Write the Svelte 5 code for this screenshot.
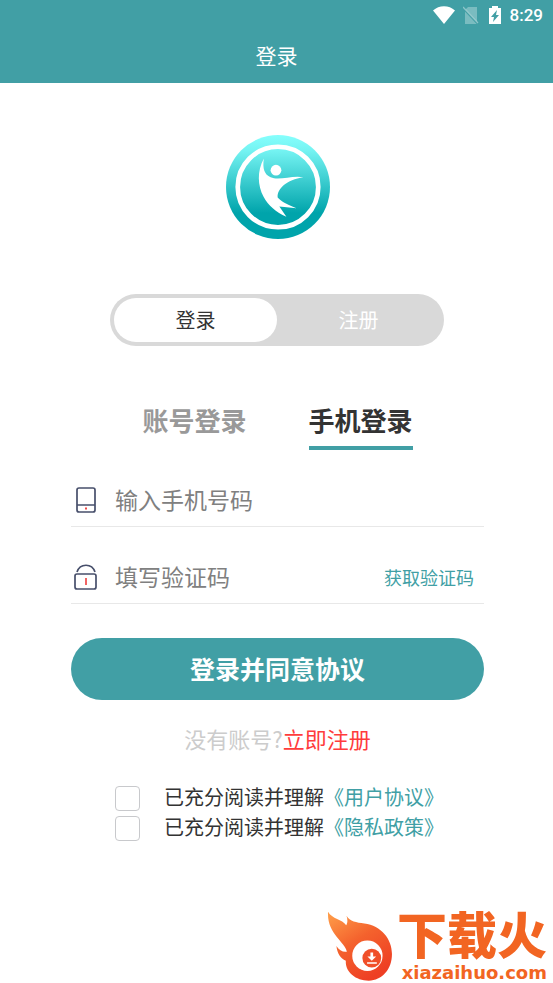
<script lang="ts">
    interface Agreement { id: string; title: string; checked: boolean }

    let mode = $state<'login' | 'register'>('login');
    let tab = $state<'account' | 'phone'>('phone');
    let phone = $state('');
    let code = $state('');

    let agreements = $state<Agreement[]>([
        { id: 'terms', title: '《用户协议》', checked: false },
        { id: 'privacy', title: '《隐私政策》', checked: false },
    ]);
</script>

<div class="page">
    <header>
        <div class="status">
            <svg class="wifi" viewBox="0 0 22 18" aria-hidden="true">
                <path d="M0 4.5C6-1.2 16-1.2 22 4.5L11 18Z" fill="#fff" />
            </svg>
            <svg class="sim" viewBox="0 0 16 18" aria-hidden="true">
                <path d="M5 1h9v17H2V4Z" fill="#fff" opacity="0.3" />
                <path d="M0 2 15 18" stroke="#419fa5" stroke-width="2" />
                <path d="M0 1 15 17" stroke="#fff" stroke-width="1.2" opacity="0.4" />
            </svg>
            <svg class="battery" viewBox="0 0 12 18" aria-hidden="true">
                <path d="M3 0h6v2h3v16H0V2h3Z" fill="#fff" />
                <path d="M8 4 2 11h3l-1 5 6-7H7Z" fill="#419fa5" />
            </svg>
            <span class="time">8:29</span>
        </div>
        <h1>登录</h1>
    </header>

    <main>
        <svg class="logo" viewBox="27 30 310 310" role="img" aria-label="Logo">
            <defs>
                <linearGradient id="teal" x1="0" y1="0" x2="0" y2="1">
                    <stop offset="0" stop-color="#86fffd" />
                    <stop offset="0.15" stop-color="#74f3f2" />
                    <stop offset="0.75" stop-color="#00a4ab" />
                    <stop offset="1" stop-color="#00a4ab" />
                </linearGradient>
            </defs>
            <circle cx="182" cy="185" r="155" fill="url(#teal)" />
            <circle cx="182" cy="185" r="120" fill="none" stroke="#fff" stroke-width="14" />
            <circle cx="176" cy="135" r="16" fill="#fff" />
            <path
                fill="#fff"
                d="M140 100C119 137 121 181 139 214C153 240 176 260 207 274L186 243L237 248C213 238 192 229 181 216C179 190 207 164 258 156C224 149 186 167 160 156C142 148 135 130 140 100Z"
            />
        </svg>

        <div class="switch">
            <button class:on={mode === 'login'} onclick={() => (mode = 'login')}>登录</button>
            <button class:on={mode === 'register'} onclick={() => (mode = 'register')}>注册</button>
        </div>

        <div class="tabs">
            <button class:on={tab === 'account'} onclick={() => (tab = 'account')}>账号登录</button>
            <button class:on={tab === 'phone'} onclick={() => (tab = 'phone')}>手机登录</button>
        </div>

        <form onsubmit={(e) => e.preventDefault()}>
            <div class="field">
                <label for="phone" aria-label="手机号码">
                    <svg viewBox="0 0 30 30" fill="none" stroke="#474f6b" stroke-width="1.7" aria-hidden="true">
                        <rect x="6" y="3" width="18" height="24" rx="2" />
                        <path d="M6 20h18" stroke-width="1.5" />
                        <path d="M14 23.5h2" stroke="#f04848" stroke-width="2" />
                    </svg>
                </label>
                <input id="phone" type="tel" placeholder="输入手机号码" bind:value={phone} />
            </div>

            <div class="field">
                <label for="code" aria-label="验证码">
                    <svg viewBox="0 0 30 30" fill="none" stroke="#474f6b" stroke-width="1.7" aria-hidden="true">
                        <path d="M6 10C9 1 21 1 24 10" />
                        <rect x="4" y="12" width="21" height="15" rx="2" />
                        <path d="M15 16v7" stroke="#f04848" />
                    </svg>
                </label>
                <input id="code" type="text" placeholder="填写验证码" bind:value={code} />
                <button type="button" class="get-code">获取验证码</button>
            </div>

            <button type="submit" class="submit">登录并同意协议</button>

            <p class="hint">没有账号?<a href="#register">立即注册</a></p>

            <div class="agreements">
                {#each agreements as item (item.id)}
                    <div class="agreement">
                        <input id={item.id} type="checkbox" bind:checked={item.checked} />
                        <label for={item.id}>已充分阅读并理解<a href={`#${item.id}`}>{item.title}</a></label>
                    </div>
                {/each}
            </div>
        </form>
    </main>

    <footer>
        <svg class="flame" viewBox="22 32 194 208" aria-hidden="true">
            <defs>
                <linearGradient id="fire" x1="0" y1="0" x2="0.6" y2="1">
                    <stop offset="0" stop-color="#ffa04a" />
                    <stop offset="0.5" stop-color="#f4622d" />
                    <stop offset="1" stop-color="#ee3f24" />
                </linearGradient>
            </defs>
            <path
                fill="url(#fire)"
                d="M24 34C36 56 66 56 78 74C83 66 82 56 79 46C89 63 108 66 132 69C182 76 214 114 214 160C214 206 184 239 145 239C104 239 74 210 77 180C61 172 51 158 49 136C57 149 68 155 80 153C74 122 20 100 24 34Z"
            />
            <circle cx="141" cy="165" r="45" fill="#fff" />
            <circle cx="154" cy="172" r="28" fill="#f04f29" />
            <path d="M150 155h8v12h9l-13 13-13-13h9ZM140 184h29v5h-29Z" fill="#fff" />
        </svg>
        <div class="brand">
            <strong>下载火</strong>
            <span>xiazaihuo.com</span>
        </div>
    </footer>
</div>

<style>
    :global(body) { background: #fff; }

    .page {
        --teal: #419fa5;
        min-height: 100vh;
        display: flex;
        flex-direction: column;
        font-family: "Noto Sans CJK SC", sans-serif;
        color: #333;
    }
    button, input { font: inherit; border: 0; padding: 0; background: none; }
    button { cursor: pointer; }
    a { color: var(--teal); text-decoration: none; }

    header { padding-bottom: 3px; background: var(--teal); color: #fff; }
    .status {
        height: 30px;
        padding: 0 10px;
        display: flex;
        align-items: center;
        justify-content: flex-end;
    }
    .wifi    { width: 22px; height: 18px; margin-right: 8px; }
    .sim     { width: 16px; height: 18px; margin-right: 10px; }
    .battery { width: 12px; height: 18px; margin-right: 9px; }
    .time    { font: 500 17px/30px Roboto, sans-serif; }
    h1 { margin: 0; font-size: 21px; font-weight: 400; line-height: 50px; text-align: center; }

    main { padding: 52px 69px 40px 71px; display: flex; flex-direction: column; }
    .logo { width: 104px; height: 104px; align-self: center; }

    .switch {
        margin: 55px 40px 0 39px;
        padding: 4px;
        height: 44px;
        display: flex;
        border-radius: 26px;
        background: #d9d9d9;
    }
    .switch button { flex: 1; padding-bottom: 2px; border-radius: 22px; color: #fff; font-size: 20px; }
    .switch .on { background: #fff; color: #333; }

    .tabs { margin-top: 54px; display: flex; justify-content: center; gap: 62px; }
    .tabs button {
        padding-bottom: 6px;
        border-bottom: 4px solid transparent;
        color: #999;
        font-size: 26px;
        font-weight: 700;
        line-height: 40px;
    }
    .tabs .on { color: #333; border-color: var(--teal); }

    .field {
        height: 52px;
        margin-top: 24px;
        display: flex;
        align-items: center;
        border-bottom: 1px solid #e8e8e8;
    }
    .field label, .field svg { display: block; width: 30px; height: 30px; }
    .field input { flex: 1; min-width: 0; margin-left: 14px; padding-bottom: 2px; font-size: 23px; outline: none; }
    .field input::placeholder { color: #808080; opacity: 1; }
    .get-code { padding-right: 10px; color: var(--teal); font-size: 18px; }

    .submit {
        width: 100%;
        height: 62px;
        margin-top: 34px;
        padding-bottom: 2px;
        border-radius: 31px;
        background: var(--teal);
        color: #fff;
        font-size: 25px;
        font-weight: 700;
    }
    .hint { margin: 22px 0 0; color: #ccc; font-size: 22px; line-height: 32px; text-align: center; }
    .hint a { color: #ff3c3c; }

    .agreements { margin: 29px 0 0 44px; }
    .agreement { height: 30px; display: flex; align-items: center; }
    .agreement input {
        appearance: none;
        box-sizing: border-box;
        width: 25px;
        height: 25px;
        margin: 0 24px 0 0;
        border: 1px solid #c8c9cc;
        border-radius: 4px;
    }
    .agreement input:checked { background: var(--teal); }
    .agreement label { padding-bottom: 2px; font-size: 20px; line-height: 28px; white-space: nowrap; }

    footer {
        margin-top: auto;
        padding-right: 6px;
        display: flex;
        align-items: center;
        justify-content: flex-end;
        gap: 4px;
    }
    .flame { width: 66px; height: 70px; }
    .brand { display: flex; flex-direction: column; align-items: flex-end; color: #f26522; }
    .brand strong { margin-bottom: 8px; font-size: 50px; font-weight: 900; line-height: 46px; }
    .brand span { font: 700 18px/20px "DejaVu Sans", sans-serif; }
</style>
